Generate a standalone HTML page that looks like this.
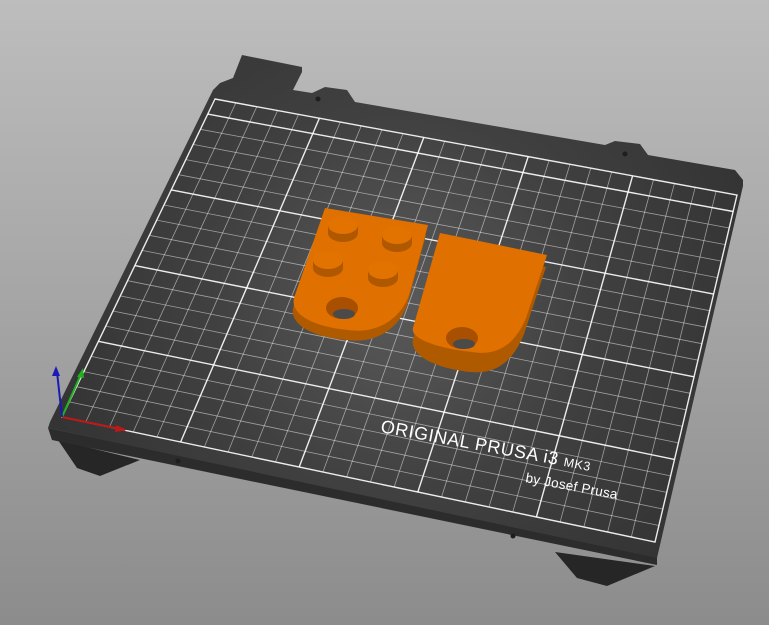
<!DOCTYPE html>
<html><head><meta charset="utf-8"><style>
html,body{margin:0;padding:0;width:769px;height:625px;overflow:hidden;background:linear-gradient(#bdbdbd,#8c8c8c);}
svg{display:block}
</style></head><body>
<svg width="769" height="625" viewBox="0 0 769 625" xmlns="http://www.w3.org/2000/svg">
<defs>
<radialGradient id="pg" cx="400" cy="300" r="380" gradientUnits="userSpaceOnUse">
<stop offset="0" stop-color="#5a5a5a"/><stop offset="0.5" stop-color="#404040"/><stop offset="1" stop-color="#333"/>
</radialGradient>
</defs>
<polygon points="58,440 77,468 100,476 140,460" fill="#262626"/>
<polygon points="555,552 577,578 607,586 655,566" fill="#262626"/>
<polygon points="48,428 657,556 657,565 52,440" fill="#2c2c2c"/>
<polygon points="213,90 220,83 233,78 242,55 302,67 302,72 293,90 312,93 325,87 347,90 355,102 605,145 615,141 640,144 648,155 735,170 743,180 743,186 657,558 48,428 50,422" fill="url(#pg)"/>
<g fill="#1e1e1e"><circle cx="318" cy="99" r="2.5"/><circle cx="625" cy="154" r="2.5"/><circle cx="178" cy="461" r="2.5"/><circle cx="513" cy="536" r="2.5"/></g>
<g stroke="#ffffff" stroke-opacity="0.5" stroke-width="0.8">
<line x1="235.9" y1="102.8" x2="85.7" y2="422"/><line x1="256.8" y1="106.7" x2="109.4" y2="427"/><line x1="277.6" y1="110.5" x2="133.2" y2="432"/><line x1="298.5" y1="114.4" x2="156.9" y2="437"/>
<line x1="340.3" y1="122" x2="204.3" y2="447"/><line x1="361.2" y1="125.9" x2="228" y2="452"/><line x1="382" y1="129.7" x2="251.8" y2="457"/><line x1="402.9" y1="133.6" x2="275.5" y2="462"/>
<line x1="444.7" y1="141.2" x2="322.9" y2="472"/><line x1="465.6" y1="145.1" x2="346.6" y2="477"/><line x1="486.4" y1="148.9" x2="370.4" y2="482"/><line x1="507.3" y1="152.8" x2="394.1" y2="487"/>
<line x1="549.1" y1="160.4" x2="441.5" y2="497"/><line x1="570" y1="164.3" x2="465.2" y2="502"/><line x1="590.8" y1="168.1" x2="489" y2="507"/><line x1="611.7" y1="172" x2="512.7" y2="512"/>
<line x1="653.5" y1="179.6" x2="560.1" y2="522"/><line x1="674.4" y1="183.5" x2="583.8" y2="527"/><line x1="695.2" y1="187.3" x2="607.6" y2="532"/><line x1="716.1" y1="191.2" x2="631.3" y2="537"/>
<line x1="200.4" y1="129.3" x2="729.2" y2="228"/><line x1="193.1" y1="144.4" x2="725.3" y2="244.6"/><line x1="185.9" y1="159.6" x2="721.4" y2="261.1"/><line x1="178.6" y1="174.7" x2="717.5" y2="277.6"/>
<line x1="164" y1="205" x2="709.7" y2="310.7"/><line x1="156.7" y1="220.1" x2="705.8" y2="327.2"/><line x1="149.4" y1="235.3" x2="701.9" y2="343.7"/><line x1="142.1" y1="250.4" x2="698" y2="360.2"/>
<line x1="127.6" y1="280.7" x2="690.1" y2="393.3"/><line x1="120.3" y1="295.9" x2="686.2" y2="409.8"/><line x1="113" y1="311" x2="682.3" y2="426.3"/><line x1="105.7" y1="326.1" x2="678.4" y2="442.9"/>
<line x1="91.1" y1="356.4" x2="670.6" y2="475.9"/><line x1="83.9" y1="371.6" x2="666.7" y2="492.4"/><line x1="76.6" y1="386.7" x2="662.8" y2="509"/><line x1="69.3" y1="401.9" x2="658.9" y2="525.5"/>
</g>
<g stroke="#ffffff" stroke-opacity="0.9" stroke-width="1.4" fill="none">
<polygon points="215,99 737,195 655,542 62,417"/>
<line x1="319.4" y1="118.2" x2="180.6" y2="442"/><line x1="423.8" y1="137.4" x2="299.2" y2="467"/><line x1="528.2" y1="156.6" x2="417.8" y2="492"/><line x1="632.6" y1="175.8" x2="536.4" y2="517"/>
<line x1="207.7" y1="114.1" x2="733.1" y2="211.5"/><line x1="171.3" y1="189.9" x2="713.6" y2="294.1"/><line x1="134.9" y1="265.6" x2="694" y2="376.8"/><line x1="98.4" y1="341.3" x2="674.5" y2="459.4"/>
</g>
<g fill="#ffffff" font-family="Liberation Sans, sans-serif">
<text transform="translate(380,432) rotate(10.5)" font-size="18" letter-spacing="0.6">ORIGINAL PRUSA i3 <tspan font-size="12.5">MK3</tspan></text>
<text transform="translate(525,482) rotate(10.5)" font-size="13.5" letter-spacing="0.3">by Josef Prusa</text>
</g>
<g stroke-width="2" fill="none">
<line x1="62" y1="417" x2="125" y2="430" stroke="#c01818"/>
<line x1="62" y1="417" x2="82" y2="372" stroke="#20b020"/>
<line x1="62" y1="417" x2="57" y2="372" stroke="#1a1ab8"/>
</g>
<polygon points="127,430 116,425 115,432" fill="#c01818"/>
<polygon points="83,368 77,377 84,378" fill="#20b020"/>
<polygon points="56,366 52,376 60,376" fill="#1a1ab8"/>
<path d="M323,218 L426,235 L408,302 C399,331 373,344 347,340 C313,337 290,325 293,308 Z" fill="#b05a00"/>
<path d="M325,208 L428,225 L410,292 C401,321 375,334 348,330 C315,327 290,315 294,298 Z" fill="#e07000"/>
<ellipse cx="342" cy="308" rx="16" ry="11" fill="#a85000"/>
<ellipse cx="344" cy="314" rx="11" ry="5" fill="#4a4a4a"/>
<g>
<path d="M328,225 v8 a15,9 0 0 0 30,0 v-8 z" fill="#b05800"/><ellipse cx="343" cy="225" rx="15" ry="9" fill="#e37300"/>
<path d="M382,235 v8 a15,9 0 0 0 30,0 v-8 z" fill="#b05800"/><ellipse cx="397" cy="235" rx="15" ry="9" fill="#e37300"/>
<path d="M313,260 v8 a15,9 0 0 0 30,0 v-8 z" fill="#b05800"/><ellipse cx="328" cy="260" rx="15" ry="9" fill="#e37300"/>
<path d="M368,270 v8 a15,9 0 0 0 30,0 v-8 z" fill="#b05800"/><ellipse cx="383" cy="270" rx="15" ry="9" fill="#e37300"/>
</g>
<path d="M438,245 L546,267 L524,334 C512,364 494,374 470,372 C432,368 410,354 413,340 Z" fill="#b05a00"/>
<path d="M440,233 L547,255 L526,318 C514,347 495,356 472,352 C435,348 410,338 413,328 Z" fill="#e07000"/>
<ellipse cx="462" cy="338" rx="16" ry="11" fill="#a85000"/>
<ellipse cx="464" cy="344" rx="11" ry="5" fill="#4a4a4a"/>
</svg>
</body></html>
